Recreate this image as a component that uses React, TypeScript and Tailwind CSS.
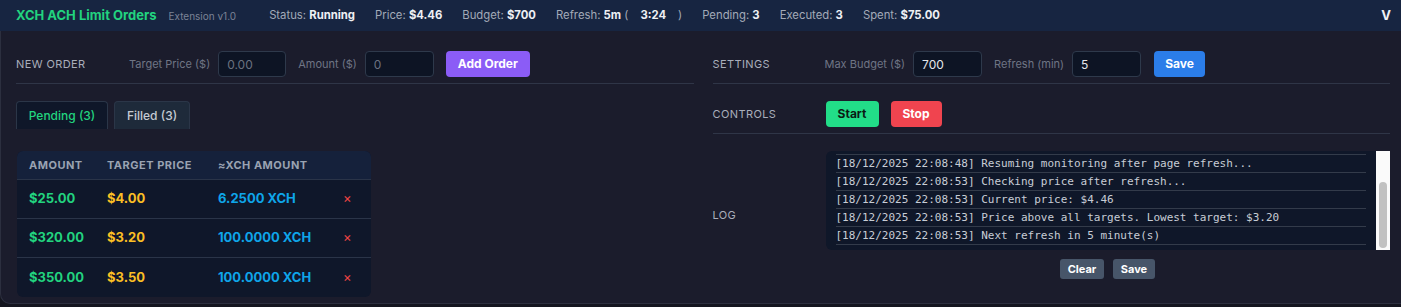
import React from "react";

const logLines = [
  "[18/12/2025 22:08:48] Resuming monitoring after page refresh...",
  "[18/12/2025 22:08:53] Checking price after refresh...",
  "[18/12/2025 22:08:53] Current price: $4.46",
  "[18/12/2025 22:08:53] Price above all targets. Lowest target: $3.20",
  "[18/12/2025 22:08:53] Next refresh in 5 minute(s)",
];

const orders = [
  { amount: "$25.00", price: "$4.00", xch: "6.2500 XCH" },
  { amount: "$320.00", price: "$3.20", xch: "100.0000 XCH" },
  { amount: "$350.00", price: "$3.50", xch: "100.0000 XCH" },
];

function Stat({ label, value }: { label: string; value: React.ReactNode }) {
  return (
    <span className="text-[11.3px] text-[#a3aab8] whitespace-nowrap">
      {label} <span className="font-bold text-[#eef0f4]">{value}</span>
    </span>
  );
}

const inputCls =
  "h-[26px] rounded-[4px] border border-[#2e394b] bg-[#0d1424] px-2 text-[12px] text-[#e5e7eb] placeholder:text-[#6b7280] outline-none";

export default function App() {
  return (
    <div
      className="w-[1401px] h-[307px] bg-[#14151f] overflow-hidden"
      style={{ fontFamily: "Inter, 'Liberation Sans', sans-serif" }}
    >
      {/* Header */}
      <div className="h-[31px] bg-[#172541] flex items-center pl-4 pr-[10px]">
        <div className="flex items-baseline">
          <span className="text-[13px] font-bold text-[#22d37f]">XCH ACH Limit Orders</span>
          <span className="ml-3 text-[10px] text-[#7b8396]">Extension v1.0</span>
        </div>
        <div className="ml-[33px] flex items-center gap-5">
          <Stat label="Status:" value="Running" />
          <Stat label="Price:" value="$4.46" />
          <Stat label="Budget:" value="$700" />
          <span className="text-[11.3px] text-[#a3aab8] whitespace-nowrap">
            Refresh: <span className="font-bold text-[#eef0f4]">5m</span> (
            <span className="inline-block px-[12px] font-bold text-[#eef0f4]">3:24</span>)
          </span>
          <Stat label="Pending:" value="3" />
          <Stat label="Executed:" value="3" />
          <Stat label="Spent:" value="$75.00" />
        </div>
        <span className="ml-auto text-[13px] font-bold text-[#eef0f4]">V</span>
      </div>

      {/* Body */}
      <div className="h-[273px] bg-[#1b1c2c] border-l border-b border-[#2c2f3f] rounded-bl-[10px] grid grid-cols-2 gap-[19px] pl-[15px] pr-[11px] pt-5">
        {/* Left column */}
        <div className="flex flex-col">
          <div className="flex items-center h-[26px]">
            <span className="w-[113px] text-[11px] tracking-[0.4px] text-[#a9aebb]">NEW ORDER</span>
            <span className="text-[11px] text-[#6f7585]">Target Price ($)</span>
            <input className={`${inputCls} ml-2 w-[68px]`} placeholder="0.00" />
            <span className="ml-3 text-[11px] text-[#6f7585]">Amount ($)</span>
            <input className={`${inputCls} ml-2 w-[69px]`} placeholder="0" />
            <button className="ml-[12px] h-[26px] w-[84px] rounded-[4px] bg-[#8b5cf6] text-[12px] font-bold text-white">
              Add Order
            </button>
          </div>
          <div className="mt-[6px] border-t border-[#2f3547]" />

          <div className="mt-[17px] flex gap-[6px]">
            <div className="h-[28px] w-[92px] rounded-t-[4px] border border-b-0 border-[#2b3648] bg-[#0f1729] flex items-center justify-center text-[12px] font-medium text-[#22d37f]">
              Pending (3)
            </div>
            <div className="h-[28px] w-[76px] rounded-t-[4px] border border-b-0 border-[#2b3648] bg-[#1e2a3a] flex items-center justify-center text-[12px] font-medium text-[#c5cad3]">
              Filled (3)
            </div>
          </div>

          <div className="mt-[22px] ml-[1px] w-[354px] rounded-[6px] overflow-hidden bg-[#0f172a]">
            <div className="grid grid-cols-[78px_111px_125px_1fr] h-[29px] items-center bg-[#15213b] border-b border-[#2a3448] text-[11px] font-bold tracking-[0.5px] text-[#9aa3b2]">
              <span className="pl-3">AMOUNT</span>
              <span className="pl-3">TARGET PRICE</span>
              <span className="pl-3">≈XCH AMOUNT</span>
              <span />
            </div>
            {orders.map((o, i) => (
              <div
                key={i}
                className={`grid grid-cols-[78px_111px_125px_1fr] h-[39px] items-center text-[13px] font-bold ${
                  i < orders.length - 1 ? "border-b border-[#2a3448]" : ""
                }`}
              >
                <span className="pl-3 text-[#22d37f]">{o.amount}</span>
                <span className="pl-3 text-[#fbbf24]">{o.price}</span>
                <span className="pl-3 text-[#0ea5e9]">{o.xch}</span>
                <span className="pl-3 text-[#ef4444] font-normal">×</span>
              </div>
            ))}
          </div>
        </div>

        {/* Right column */}
        <div className="flex flex-col">
          <div className="flex items-center h-[26px]">
            <span className="w-[112px] text-[11px] tracking-[0.4px] text-[#a9aebb]">SETTINGS</span>
            <span className="text-[11px] text-[#6f7585]">Max Budget ($)</span>
            <input className={`${inputCls} ml-2 w-[69px]`} defaultValue="700" />
            <span className="ml-3 text-[11px] text-[#6f7585]">Refresh (min)</span>
            <input className={`${inputCls} ml-2 w-[69px]`} defaultValue="5" />
            <button className="ml-[13px] h-[26px] w-[51px] rounded-[4px] bg-[#2b7de9] text-[12px] font-bold text-white">
              Save
            </button>
          </div>
          <div className="mt-[6px] border-t border-[#2f3547]" />

          <div className="mt-[17px] flex items-center h-[26px]">
            <span className="w-[113px] text-[11px] tracking-[0.4px] text-[#a9aebb]">CONTROLS</span>
            <button className="h-[26px] w-[53px] rounded-[4px] bg-[#22dd88] text-[12px] font-bold text-[#0b1a14]">
              Start
            </button>
            <button className="ml-3 h-[26px] w-[51px] rounded-[4px] bg-[#f0444f] text-[12px] font-bold text-white">
              Stop
            </button>
          </div>
          <div className="mt-[6px] border-t border-[#2f3547]" />

          <div className="mt-[17px] flex items-center">
            <span className="w-[113px] text-[11px] tracking-[0.4px] text-[#a9aebb]">LOG</span>
            <div className="flex flex-col w-[564px]">
              <div className="h-[99px] flex rounded-l-[6px] bg-[#0f1729] overflow-hidden">
                <div
                  className="flex-1 px-[10px]"
                  style={{ fontFamily: "'DejaVu Sans Mono', 'Liberation Mono', monospace" }}
                >
                  <div className="h-[4px] border-b border-[#333b4a]" />
                  {logLines.map((l, i) => (
                    <div
                      key={i}
                      className="h-[18px] border-b border-[#333b4a] text-[11px] leading-[17px] text-[#c8cdd6] whitespace-nowrap"
                    >
                      {l}
                    </div>
                  ))}
                </div>
                <div className="w-[14px] bg-[#fafafa] flex flex-col pt-[31px] pb-[2px] px-[3px]">
                  <div className="flex-1 rounded-full bg-[#c1c1c1]" />
                </div>
              </div>
              <div className="mt-[9px] flex justify-center gap-[9px]">
                <button className="h-[20px] w-[44px] rounded-[3px] bg-[#475569] text-[11px] font-bold text-white">
                  Clear
                </button>
                <button className="h-[20px] w-[42px] rounded-[3px] bg-[#475569] text-[11px] font-bold text-white">
                  Save
                </button>
              </div>
            </div>
          </div>
        </div>
      </div>
    </div>
  );
}
